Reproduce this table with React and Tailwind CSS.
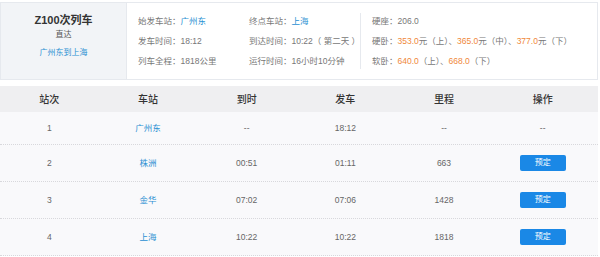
import React from "react";

const font = { fontFamily: '"Liberation Sans", "Noto Sans CJK SC", sans-serif' };

const rows = [
  { n: "1", s: "广州东", a: "--", d: "18:12", k: "--", btn: false },
  { n: "2", s: "株洲", a: "00:51", d: "01:11", k: "663", btn: true },
  { n: "3", s: "金华", a: "07:02", d: "07:06", k: "1428", btn: true },
  { n: "4", s: "上海", a: "10:22", d: "10:22", k: "1818", btn: true },
];

function Info({ label, children }) {
  return (
    <div className="h-[20px] flex items-center text-[8.5px] text-[#777] whitespace-nowrap">
      <span>{label}：</span>
      {children}
    </div>
  );
}

export default function App() {
  return (
    <div className="w-[600px] h-[257px] bg-white overflow-hidden pt-[2px]" style={font}>
      <div className="w-[598px] h-[78px] border border-[#e6e9ee] flex">
        <div className="w-[126px] bg-[#f2f4f7] border-r border-[#e6e9ee] flex flex-col items-center pt-[10px]">
          <div className="text-[11px] font-bold text-[#333] leading-[14px]">Z100次列车</div>
          <div className="text-[8px] text-[#555] leading-[12px] mt-[2px]">直达</div>
          <div className="text-[8px] text-[#2a8fd2] leading-[12px] mt-[6px]">广州东到上海</div>
        </div>
        <div className="flex pt-[8px] pl-[11px]">
          <div className="w-[111px] flex flex-col">
            <Info label="始发车站"><span className="text-[#2a8fd2]">广州东</span></Info>
            <Info label="发车时间"><span>18:12</span></Info>
            <Info label="列车全程"><span>1818公里</span></Info>
          </div>
          <div className="w-[111px] flex flex-col">
            <Info label="终点车站"><span className="text-[#2a8fd2]">上海</span></Info>
            <Info label="到达时间"><span>10:22（ 第二天 ）</span></Info>
            <Info label="运行时间"><span>16小时10分钟</span></Info>
          </div>
        </div>
        <div className="my-[10px] border-l border-[#e6e9ee]" />
        <div className="flex flex-col pt-[8px] pl-[11px]">
          <Info label="硬座"><span>206.0</span></Info>
          <Info label="硬卧">
            <span className="text-[#f0883a]">353.0</span><span>元（上）、</span>
            <span className="text-[#f0883a]">365.0</span><span>元（中）、</span>
            <span className="text-[#f0883a]">377.0</span><span>元（下）</span>
          </Info>
          <Info label="软卧">
            <span className="text-[#f0883a]">640.0</span><span>（上）、</span>
            <span className="text-[#f0883a]">668.0</span><span>（下）</span>
          </Info>
        </div>
      </div>

      <div className="w-[598px] mt-[6px] bg-[#f9f9fb]">
        <div className="grid grid-cols-6 pr-[6px] h-[26px] bg-[#efeff1] items-center text-center text-[10px] text-[#333] font-medium">
          <div>站次</div>
          <div>车站</div>
          <div>到时</div>
          <div>发车</div>
          <div>里程</div>
          <div>操作</div>
        </div>
        {rows.map((r) => (
          <div
            key={r.n}
            className={`grid grid-cols-6 pr-[6px] items-center text-center text-[8.5px] text-[#666] border-b border-dotted border-[#d8d8dc] ${r.btn ? "h-[37px]" : "h-[33px]"}`}
          >
            <div>{r.n}</div>
            <div className="text-[#2a8fd2]">{r.s}</div>
            <div>{r.a}</div>
            <div>{r.d}</div>
            <div>{r.k}</div>
            <div className="flex justify-center">
              {r.btn ? (
                <div className="w-[46px] h-[16px] rounded-[2px] bg-[#1a88e6] text-white text-[8px] flex items-center justify-center">
                  预定
                </div>
              ) : (
                <span>--</span>
              )}
            </div>
          </div>
        ))}
      </div>
    </div>
  );
}
